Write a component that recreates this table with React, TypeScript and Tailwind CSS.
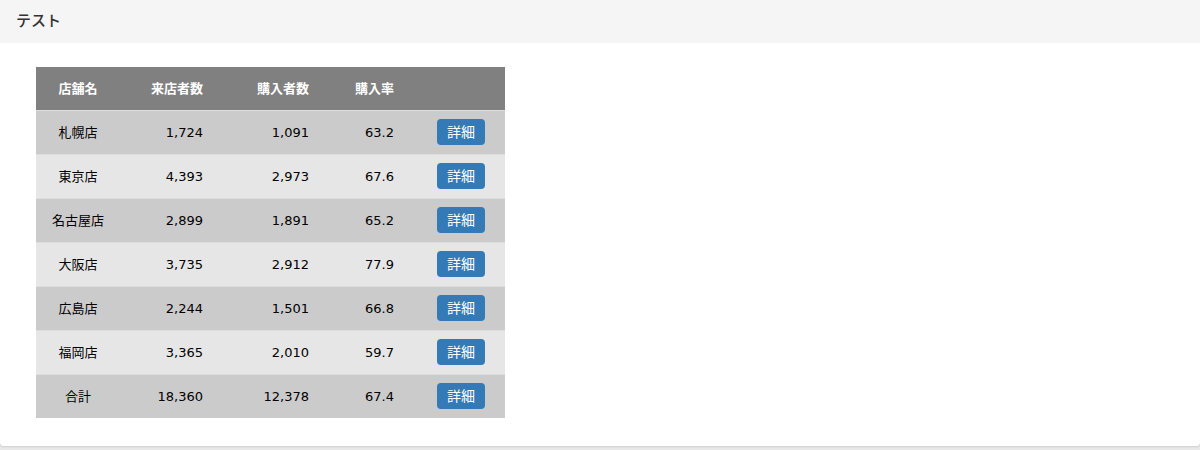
import React from "react";

const rows = [
  ["札幌店", "1,724", "1,091", "63.2"],
  ["東京店", "4,393", "2,973", "67.6"],
  ["名古屋店", "2,899", "1,891", "65.2"],
  ["大阪店", "3,735", "2,912", "77.9"],
  ["広島店", "2,244", "1,501", "66.8"],
  ["福岡店", "3,365", "2,010", "59.7"],
  ["合計", "18,360", "12,378", "67.4"],
];

export default function App() {
  return (
    <div
      className="h-[450px] w-[1200px] bg-[#e8e8e8] text-[#333]"
      style={{ fontFamily: '"DejaVu Sans", "Noto Sans CJK JP", sans-serif' }}
    >
      <div className="h-[446px] overflow-hidden rounded-b-[4px] bg-white shadow-[0_1px_2px_rgba(0,0,0,0.1)]">
        <div className="flex h-[43px] items-center bg-[#f5f5f5] pl-[16px] text-[15px] font-medium leading-none">
          テスト
        </div>
        <div className="pl-[36px] pt-[24px]">
          <table className="w-[469px] table-fixed border-collapse text-[13px] leading-none">
            <colgroup>
              <col className="w-[84px]" />
              <col className="w-[99px]" />
              <col className="w-[106px]" />
              <col className="w-[85px]" />
              <col className="w-[95px]" />
            </colgroup>
            <thead>
              <tr className="h-[43px] bg-[#808080] font-bold text-white">
                <th className="text-center font-bold">店舗名</th>
                <th className="pr-[16px] text-right font-bold">来店者数</th>
                <th className="pr-[16px] text-right font-bold">購入者数</th>
                <th className="pr-[16px] text-right font-bold">購入率</th>
                <th></th>
              </tr>
            </thead>
            <tbody>
              {rows.map((r, i) => (
                <tr
                  key={r[0]}
                  className={`h-[44px] border-t border-[#dedede] text-[#000] ${
                    i % 2 === 0 ? "bg-[#cbcbcb]" : "bg-[#e6e6e6]"
                  }`}
                >
                  <td className="text-center">{r[0]}</td>
                  <td className="pr-[16px] text-right">{r[1]}</td>
                  <td className="pr-[16px] text-right">{r[2]}</td>
                  <td className="pr-[16px] text-right">{r[3]}</td>
                  <td className="pl-[27px]">
                    <button className="flex h-[26px] w-[48px] items-center justify-center rounded-[4px] bg-[#337ab7] text-[14px] leading-none text-white">
                      詳細
                    </button>
                  </td>
                </tr>
              ))}
            </tbody>
          </table>
        </div>
      </div>
    </div>
  );
}
